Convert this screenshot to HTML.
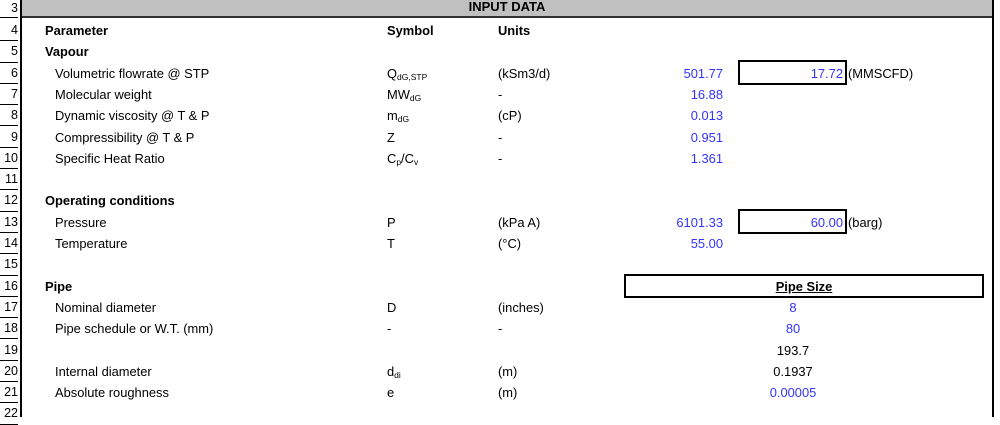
<!DOCTYPE html>
<html><head><meta charset="utf-8"><style>
body{margin:0;width:1000px;height:417px;overflow:hidden;background:#fff;font-family:"Liberation Sans",Arial,sans-serif;font-size:12.9px;color:#000;position:relative}
.a{position:absolute;line-height:21px;white-space:nowrap}
.rn{position:absolute;left:0;width:18px;text-align:right;border-bottom:1px solid #000;height:20.3px;line-height:21px;font-size:12.5px}
.b{font-weight:bold}
.bl{color:#3333ff}
.r{text-align:right}
sub{font-size:8.5px;vertical-align:-2px}
.c{text-align:center}
</style></head><body>
<div style="position:absolute;left:20px;top:0;width:2px;height:417px;background:#000"></div>
<div style="position:absolute;left:22px;top:0;width:970px;height:16px;background:#c0c0c0;border-bottom:2px solid #333"></div>
<div style="position:absolute;left:992px;top:0;width:2px;height:417px;background:#000"></div>
<div class="a b" style="left:22px;width:970px;text-align:center;top:-4px;font-size:13px">INPUT DATA</div>
<div class="rn" style="top:-1px;height:18px;line-height:18px">3</div>
<div class="rn" style="top:20px">4</div><div class="rn" style="top:41.3px">5</div><div class="rn" style="top:62.6px">6</div><div class="rn" style="top:83.9px">7</div><div class="rn" style="top:105.2px">8</div><div class="rn" style="top:126.5px">9</div><div class="rn" style="top:147.8px">10</div><div class="rn" style="top:169.1px">11</div><div class="rn" style="top:190.4px">12</div><div class="rn" style="top:211.7px">13</div><div class="rn" style="top:233px">14</div><div class="rn" style="top:254.3px">15</div><div class="rn" style="top:275.6px">16</div><div class="rn" style="top:296.9px">17</div><div class="rn" style="top:318.2px">18</div><div class="rn" style="top:339.5px">19</div><div class="rn" style="top:360.8px">20</div><div class="rn" style="top:382.1px">21</div><div class="rn" style="top:403.4px">22</div>

<div class="a b" style="left:45px;top:20px">Parameter</div>
<div class="a b" style="left:387px;top:20px">Symbol</div>
<div class="a b" style="left:498px;top:20px">Units</div>
<div class="a b" style="left:45px;top:41.3px">Vapour</div>

<div class="a" style="left:55px;top:62.6px">Volumetric flowrate @ STP</div>
<div class="a" style="left:387px;top:62.6px">Q<sub>dG,STP</sub></div>
<div class="a" style="left:498px;top:62.6px">(kSm3/d)</div>
<div class="a bl r" style="right:277px;top:62.6px">501.77</div>
<div style="position:absolute;left:738px;top:60px;width:105px;height:21px;border:2px solid #000"></div>
<div class="a bl r" style="right:157px;top:62.6px">17.72</div>
<div class="a" style="left:848px;top:62.6px">(MMSCFD)</div>

<div class="a" style="left:55px;top:83.9px">Molecular weight</div>
<div class="a" style="left:387px;top:83.9px">MW<sub>dG</sub></div>
<div class="a" style="left:498px;top:83.9px">-</div>
<div class="a bl r" style="right:277px;top:83.9px">16.88</div>

<div class="a" style="left:55px;top:105.2px">Dynamic viscosity @ T &amp; P</div>
<div class="a" style="left:387px;top:105.2px">m<sub>dG</sub></div>
<div class="a" style="left:498px;top:105.2px">(cP)</div>
<div class="a bl r" style="right:277px;top:105.2px">0.013</div>

<div class="a" style="left:55px;top:126.5px">Compressibility @ T &amp; P</div>
<div class="a" style="left:387px;top:126.5px">Z</div>
<div class="a" style="left:498px;top:126.5px">-</div>
<div class="a bl r" style="right:277px;top:126.5px">0.951</div>

<div class="a" style="left:55px;top:147.8px">Specific Heat Ratio</div>
<div class="a" style="left:387px;top:147.8px">C<sub>p</sub>/C<sub>v</sub></div>
<div class="a" style="left:498px;top:147.8px">-</div>
<div class="a bl r" style="right:277px;top:147.8px">1.361</div>

<div class="a b" style="left:45px;top:190.4px">Operating conditions</div>
<div class="a" style="left:55px;top:211.7px">Pressure</div>
<div class="a" style="left:387px;top:211.7px">P</div>
<div class="a" style="left:498px;top:211.7px">(kPa A)</div>
<div class="a bl r" style="right:277px;top:211.7px">6101.33</div>
<div style="position:absolute;left:738px;top:209px;width:105px;height:21px;border:2px solid #000"></div>
<div class="a bl r" style="right:157px;top:211.7px">60.00</div>
<div class="a" style="left:848px;top:211.7px">(barg)</div>

<div class="a" style="left:55px;top:233px">Temperature</div>
<div class="a" style="left:387px;top:233px">T</div>
<div class="a" style="left:498px;top:233px">(°C)</div>
<div class="a bl r" style="right:277px;top:233px">55.00</div>

<div class="a b" style="left:45px;top:275.6px">Pipe</div>
<div style="position:absolute;left:624px;top:274px;width:356px;height:20px;border:2px solid #000"></div>
<div class="a b c" style="left:624px;width:360px;top:275.6px;text-decoration:underline">Pipe Size</div>

<div class="a" style="left:55px;top:296.9px">Nominal diameter</div>
<div class="a" style="left:387px;top:296.9px">D</div>
<div class="a" style="left:498px;top:296.9px">(inches)</div>
<div class="a bl c" style="left:743px;width:100px;top:296.9px">8</div>

<div class="a" style="left:55px;top:318.2px">Pipe schedule or W.T. (mm)</div>
<div class="a" style="left:387px;top:318.2px">-</div>
<div class="a" style="left:498px;top:318.2px">-</div>
<div class="a bl c" style="left:743px;width:100px;top:318.2px">80</div>

<div class="a c" style="left:743px;width:100px;top:339.5px">193.7</div>

<div class="a" style="left:55px;top:360.8px">Internal diameter</div>
<div class="a" style="left:387px;top:360.8px">d<sub>di</sub></div>
<div class="a" style="left:498px;top:360.8px">(m)</div>
<div class="a c" style="left:743px;width:100px;top:360.8px">0.1937</div>

<div class="a" style="left:55px;top:382.1px">Absolute roughness</div>
<div class="a" style="left:387px;top:382.1px">e</div>
<div class="a" style="left:498px;top:382.1px">(m)</div>
<div class="a bl c" style="left:743px;width:100px;top:382.1px">0.00005</div>
</body></html>
